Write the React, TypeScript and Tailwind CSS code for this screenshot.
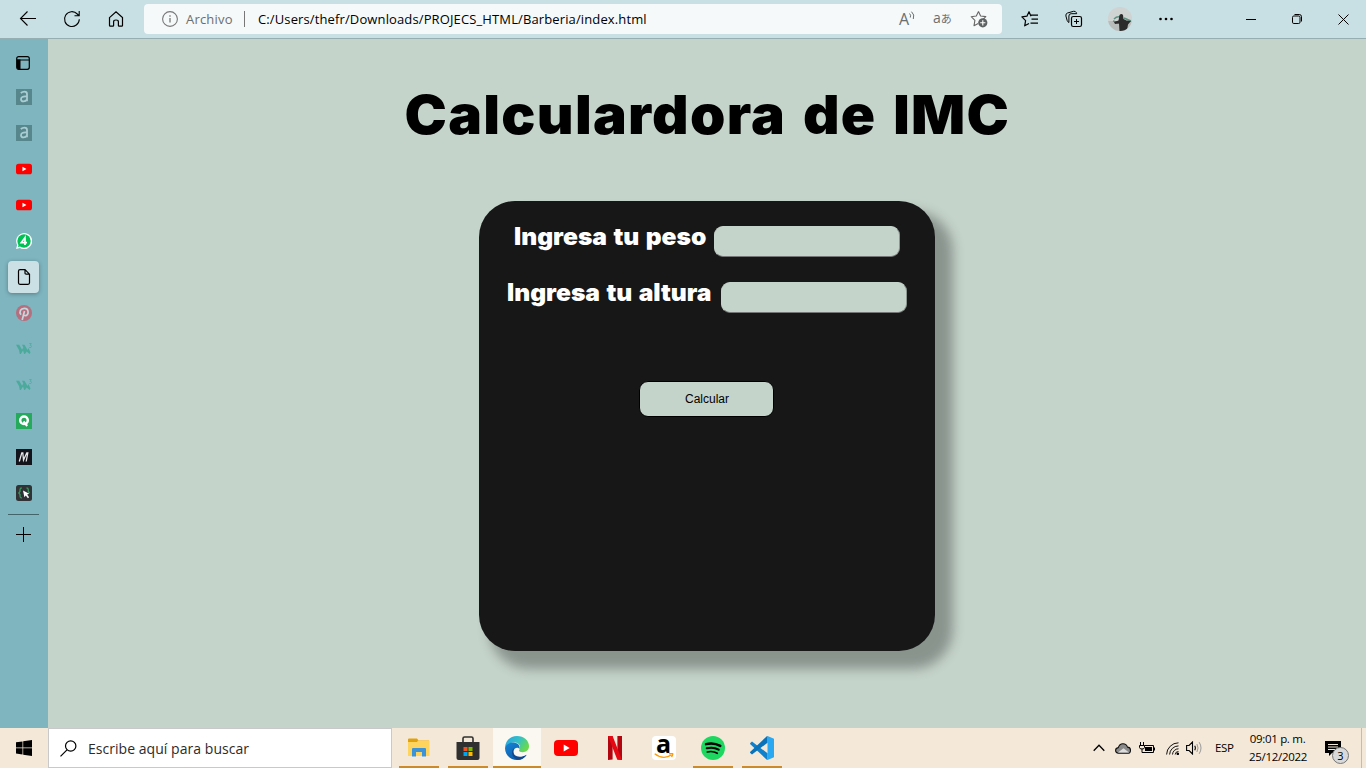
import React from "react";

type IconProps = { children: React.ReactNode; w?: number; h?: number; vb?: string; className?: string };

const Svg = ({ children, w = 16, h = 16, vb = "0 0 16 16", className = "" }: IconProps) => (
  <svg width={w} height={h} viewBox={vb} fill="none" className={`block shrink-0 ${className}`}>
    {children}
  </svg>
);

const BackIcon = () => (
  <Svg w={18} h={18} vb="0 0 18 18">
    <path d="M8.5 1.5 1.5 8.5l7 7M1.8 8.5H17" stroke="#000" strokeWidth="1.1" />
  </Svg>
);
const ReloadIcon = () => (
  <Svg w={18} h={18} vb="0 0 18 18">
    <path d="M16.3 9.2A7.4 7.4 0 1 1 14.3 4l1.5 1.5M16.2 1v4.7h-4.7" stroke="#000" strokeWidth="1.1" />
  </Svg>
);
const HomeIcon = () => (
  <Svg w={16} h={18} vb="0 0 16 18">
    <path d="M1.5 7.6 8 1.8l6.5 5.8v7.8q0 .8-.8.8h-2.6q-.7 0-.7-.7v-3.8Q10.400 10 8 10t-2.400 1.700v3.800q0 .7-.7.7H2.300q-.8 0-.8-.8z" stroke="#000" strokeWidth="1.2" />
  </Svg>
);
const InfoIcon = () => (
  <Svg>
    <circle cx="8" cy="8" r="7.4" stroke="#777" strokeWidth="1.1" />
    <path d="M8 7v4.500M8 4.300v1.400" stroke="#777" strokeWidth="1.300" />
  </Svg>
);
const StarAddIcon = () => (
  <Svg w={18} h={18} vb="0 0 18 18">
    <path d="M8.500 1.500 10.600 6l5.200.6-2.500 2.500M8.500 1.500 6.300 6l-5.100.7 3.700 3.700-.9 5.300 4.200-2.200" stroke="#666" strokeWidth="1.100" strokeLinejoin="round" />
    <circle cx="12.800" cy="12.800" r="4.600" fill="#5d6163" />
    <path d="M12.800 10.200v5.200M10.200 12.800h5.200" stroke="#fff" strokeWidth="1.100" />
  </Svg>
);
const FavoritesIcon = () => (
  <Svg w={18} h={18} vb="0 0 18 18">
    <path d="M10 6.200 8 1.700 5.900 6.200l-5 .7 3.700 3.700-.9 5.200 4.300-2.300M10 5.200h7M10.500 9.200H17M9.500 13.200H17" stroke="#000" strokeWidth="1.200" strokeLinejoin="round" />
  </Svg>
);
const CollectionsIcon = () => (
  <Svg w={18} h={18} vb="0 0 18 18">
    <rect x="6.500" y="6.500" width="10" height="10" rx="1.800" stroke="#000" strokeWidth="1.200" />
    <path d="M11.500 9v5M9 11.500h5M3.900 12.500Q2.600 11.800 2.200 10.600L.9 6Q.400 3.800 2.500 3l6-1.700q2-.4 2.800 1.300l.4 1.100M3.900 12.500V6q0-2.300 2.300-2.300h5.500" stroke="#000" strokeWidth="1" />
  </Svg>
);
const Avatar = () => (
  <Svg w={24} h={24} vb="0 0 24 24">
    <defs><clipPath id="av"><circle cx="12" cy="12" r="12" /></clipPath></defs>
    <g clipPath="url(#av)">
      <path fill="#cfd3d1" d="M0 0h24v24H0z" />
      <path fill="#b8bdbb" d="M0 14h24v10H0z" />
      <path d="M6 12Q9 9 12 10M16 11l7 3M5 14l6 2" stroke="#5f8f80" strokeWidth="1.500" />
      <path fill="#2c2a2b" d="M11.500 8q2-2 3.500 0l.5 4 3 1.500 4.500.500-3 3.500-1 6-7.500 1-.5-8-4 .500-1-2 4.500-1.500z" />
    </g>
  </Svg>
);

const TabsIcon = () => (
  <Svg w={14} h={14} vb="0 0 14 14">
    <rect x=".7" y=".7" width="12.600" height="12.600" rx="2" stroke="#000" strokeWidth="1.200" />
    <path d="M1 4h12" stroke="#000" />
    <path d="M1 3.500h3.500V13H2L1 12z" fill="#000" />
  </Svg>
);
const AlphaTab = () => (
  <Svg>
    <path fill="#58868d" d="M0 0h16v16H0z" />
    <path d="M4.800 4Q6.500 2.600 8.500 2.600 11 2.600 11 5v7.300M11 7.500C6.500 7 5 8.300 5 10.200c0 2.900 4.500 2.900 6 .3" stroke="#a9cdd3" strokeWidth="1.800" />
  </Svg>
);
const YoutubeIcon = ({ w, h }: { w: number; h: number }) => (
  <Svg w={w} h={h} vb="0 0 24 16">
    <rect width="24" height="16" rx="4" fill="#f00" />
    <path d="m9.700 4.600 6 3.400-6 3.400z" fill="#fff" />
  </Svg>
);
const WhatsappIcon = () => (
  <Svg>
    <path d="M0 16 1.200 12A8 8 0 1 1 4 14.900z" fill="#fff" />
    <circle cx="8" cy="8" r="6.700" fill="#00c254" />
    <path d="m2 14 .8-3L5 13.300z" fill="#00c254" />
    <path d="M9 12V4.500L5.300 9.600H11" stroke="#fff" strokeWidth="1.700" />
  </Svg>
);
const FileIcon = () => (
  <Svg w={14} h={16} vb="0 0 14 16">
    <path d="M8 .7H3Q1.500.7 1.500 2.200v11.600q0 1.500 1.500 1.500h8q1.500 0 1.500-1.500V5.200zV4q0 1.200 1.200 1.200h3.300" stroke="#000" strokeWidth="1.200" />
  </Svg>
);
const PinterestIcon = () => (
  <Svg>
    <circle cx="8" cy="8" r="8" fill="#b66f7e" />
    <path d="M5 9.800C2.800 6.800 4.500 3.300 8.300 3.300c5 0 4.800 7.300 1 7.300-1.200 0-1.900-.6-2-1.300M8.500 6 6.200 15" stroke="#c4d7dd" strokeWidth="1.700" />
  </Svg>
);
const W3Icon = () => (
  <Svg>
    <path d="M0 3.800h3.200L6 8.800 7.300 6.500 6 3.800h2.500l3 5.200 1-2 2 4.500-1 1.500-2.800-2.500-1.700 2.500H8.200L7 9.500 4.800 13h-1L3 9z" fill="#4baa9c" />
    <path d="M13.300 2.500h2L14.200 4.300q1.300 0 1.300 1.300t-2.300.9" stroke="#52ada2" strokeWidth=".9" />
  </Svg>
);
const QIcon = () => (
  <Svg>
    <path fill="#25a95a" d="M0 0h16v16H0z" />
    <circle cx="8" cy="7.200" r="3.800" stroke="#fff" strokeWidth="2.500" />
    <path d="m7.500 8.500 3.700 4.500" stroke="#fff" strokeWidth="2.200" />
  </Svg>
);
const MIcon = () => (
  <Svg>
    <path fill="#14141c" d="M0 0h16v16H0z" />
    <path d="M3.300 12.500 5.800 3.800h1l.7 7.200 3.300-7.200h1L10.200 12.500" stroke="#e8e8ea" strokeWidth="1.300" />
  </Svg>
);
const CursorIcon = () => (
  <Svg>
    <rect width="16" height="16" rx="2.500" fill="#303236" />
    <path d="M5.800 3Q4 3 4 4.800V6.500L2.800 8 4 9.500v1.700Q4 13 5.800 13M10.500 3q1.800 0 1.800 1.800v1.700L13.500 8" stroke="#35955b" strokeWidth="1.300" />
    <path d="m7 5.500 6.300 3.200-2.200.8 2 2.700-1.200 1-2.100-2.700-1.400 1.800z" fill="#fff" />
  </Svg>
);

const TabSlot = ({ children }: { children: React.ReactNode }) => (
  <div className="flex h-9 w-12 shrink-0 items-center justify-center">{children}</div>
);

const Sidebar = () => (
  <aside className="flex w-12 shrink-0 flex-col bg-[#7eb5bf] pt-[6px]">
    <div className="flex h-9 items-center pl-4"><TabsIcon /></div>
    <div className="-mt-[2px]" />
    <TabSlot><AlphaTab /></TabSlot>
    <TabSlot><AlphaTab /></TabSlot>
    <TabSlot><YoutubeIcon w={16} h={12} /></TabSlot>
    <TabSlot><YoutubeIcon w={16} h={12} /></TabSlot>
    <TabSlot><WhatsappIcon /></TabSlot>
    <div className="flex h-9 items-center pl-2">
      <div className="flex h-8 w-[31px] items-center justify-center rounded-[4px] bg-[#cae0e4] shadow-[0_1px_4px_rgba(0,0,0,0.3)]"><FileIcon /></div>
    </div>
    <TabSlot><PinterestIcon /></TabSlot>
    <TabSlot><W3Icon /></TabSlot>
    <TabSlot><W3Icon /></TabSlot>
    <TabSlot><QIcon /></TabSlot>
    <TabSlot><MIcon /></TabSlot>
    <TabSlot><CursorIcon /></TabSlot>
    <div className="mt-[3px] ml-2 h-px w-[31px] bg-[#43646a]" />
    <div className="mt-[12px] pl-4">
      <Svg w={15} h={15} vb="0 0 15 15"><path d="M7.500 0v15M0 7.500h15" stroke="#000" /></Svg>
    </div>
  </aside>
);

const BrowserBar = () => (
  <header className="flex h-[39px] shrink-0 items-center border-b border-[#96aeb1] bg-[#c8dfe3] font-['Open_Sans','Noto_Sans_CJK_JP',sans-serif]">
    <div className="ml-[19px]"><BackIcon /></div>
    <div className="ml-[26px]"><ReloadIcon /></div>
    <div className="ml-[27px]"><HomeIcon /></div>
    <div className="ml-[20px] flex h-[30px] w-[858px] items-center rounded-[4px] bg-[#f5f9fa] pl-[18px]">
      <InfoIcon />
      <span className="ml-2 w-[58px] pt-px text-[13px] tracking-[0.200px] whitespace-nowrap text-[#6b6e70]">Archivo</span>
      <div className="h-4 w-px bg-[#777]" />
      <span className="ml-[13px] w-[641px] pt-px text-[13px] tracking-[0.125px] whitespace-nowrap text-black">C:/Users/thefr/Downloads/PROJECS_HTML/Barberia/index.html</span>
      <div className="flex w-[17px] items-start text-[#6b6e70]">
        <span className="w-[10px] text-[16px] leading-[17px]">A</span>
        <Svg w={7} h={9} vb="0 0 7 9"><path d="M.5 2.500q1.800 1.500.8 4M2.500.7q3.500 3 1.800 7.300" stroke="#6b6e70" /></Svg>
      </div>
      <span className="ml-[17px] flex w-[18px] items-center pb-[2px] leading-4 whitespace-nowrap text-[#6b6e70]"><span className="text-[14px]">a</span><span className="pt-px text-[11px]">あ</span></span>
      <div className="ml-[19px]"><StarAddIcon /></div>
    </div>
    <div className="ml-[19px]"><FavoritesIcon /></div>
    <div className="ml-[26px]"><CollectionsIcon /></div>
    <div className="ml-[25px]"><Avatar /></div>
    <div className="ml-[27px]"><Svg w={14} h={4} vb="0 0 14 4"><g fill="#000"><circle cx="1.500" cy="2" r="1.300" /><circle cx="7" cy="2" r="1.300" /><circle cx="12.500" cy="2" r="1.300" /></g></Svg></div>
    <div className="ml-[73px] h-px w-[10px] bg-black" />
    <div className="ml-[36px]"><Svg w={10} h={10} vb="0 0 10 10"><rect x=".5" y="2" width="7.500" height="7.500" rx="1.300" stroke="#000" /><path d="M2.500.5h4.800Q9.500.5 9.500 2.700v4.800" stroke="#000" /></Svg></div>
    <div className="ml-[36px]"><Svg w={11} h={11} vb="0 0 11 11"><path d="m.5.5 10 10M10.500.5l-10 10" stroke="#000" /></Svg></div>
  </header>
);

const Field = ({ label, labelClass }: { label: string; labelClass: string }) => (
  <div className="flex h-[56px] items-start justify-center">
    <label className={`-mt-px mr-2 font-['Inter',sans-serif] text-[24px] leading-6 font-black whitespace-nowrap text-white ${labelClass}`}>
      <span className="inline-block origin-left scale-x-[1.025] [word-spacing:1.500px]">{label}</span>
    </label>
    <input className="h-[31px] w-[186px] rounded-[9px] border border-[#c5d4cb] border-r-[#8e9692] border-b-[#767676] bg-[#c5d4cb] outline-none" />
  </div>
);

const Page = () => (
  <main className="flex flex-1 flex-col items-center bg-[#c5d4cb] font-['Liberation_Sans',sans-serif]">
    <h1 className="mt-[44px] flex h-[64px] w-[602px] items-center justify-center font-['Inter',sans-serif] text-[54px] leading-none font-black whitespace-nowrap text-black">
      <span className="inline-block scale-x-[1.05] tracking-[1.200px] [word-spacing:4px]">Calculardora de IMC</span>
    </h1>
    <section className="mt-[54px] flex h-[450px] w-[456px] flex-col items-center rounded-[36px] bg-[#171717] pt-[25px] shadow-[14px_14px_12px_4px_rgba(0,0,0,0.3)]">
      <Field label="Ingresa tu peso" labelClass="w-[192px]" />
      <Field label="Ingresa tu altura" labelClass="w-[206px]" />
      <button className="mt-[43px] mr-px h-9 w-[135px] rounded-[9px] border border-black bg-[#c5d4cb] pl-px text-[12px] text-black">Calcular</button>
    </section>
  </main>
);

const WindowsIcon = () => (
  <Svg><path fill="#000" d="m0 2.300 6.500-.9v6.100H0zM7.200 1.300 16 0v7.500H7.200zM0 8.300h6.500v6.200L0 13.600zM7.200 8.300H16V16l-8.800-1.300z" /></Svg>
);
const ExplorerIcon = () => (
  <Svg w={22} h={20} vb="0 0 22 20">
    <path d="M0 1.500Q0 .5 1 .5h8l1.500 2H21v3H0z" fill="#dfa20c" />
    <path d="M10 2.500h11q.5 0 .5.500v15H0V4h9z" fill="#ffd45e" />
    <path d="M4 18.500V11q0-1 1-1h12q1 0 1 1v7.500h-4V14H8v4.500z" fill="#3d93d8" />
  </Svg>
);
const StoreIcon = () => (
  <Svg w={24} h={24} vb="0 0 24 24">
    <path d="M7 6V2.500Q7 1 8.500 1h7Q17 1 17 2.500V6" stroke="#303030" strokeWidth="1.600" />
    <path d="M.5 6h23v16q0 2-2 2h-19q-2 0-2-2z" fill="#303030" />
    <path fill="#f25022" d="M7.500 11h4v4h-4z" /><path fill="#7fba00" d="M12.500 11h4v4h-4z" />
    <path fill="#00a4ef" d="M7.500 16h4v4h-4z" /><path fill="#ffb900" d="M12.500 16h4v4h-4z" />
  </Svg>
);
const EdgeIcon = () => (
  <Svg w={24} h={24} vb="0 0 24 24">
    <defs>
      <linearGradient id="eg" x1="0" y1="0" x2="1" y2=".5"><stop offset=".1" stopColor="#2aa5dc" /><stop offset=".55" stopColor="#34c1c6" /><stop offset="1" stopColor="#68d94e" /></linearGradient>
      <linearGradient id="eb" x1="0" y1="0" x2=".7" y2="1"><stop offset="0" stopColor="#1685d6" /><stop offset="1" stopColor="#0b58a5" /></linearGradient>
    </defs>
    <path d="M0 12C.3 4.500 5.500 0 12 0c7 0 12 4.800 12 10 0 4-3 6.200-6.300 6.200-3 0-4.200-1.200-3.500-2.200 2.500-4-1-7.400-5-7.400C5 6.600 1 8.500 0 12z" fill="url(#eg)" />
    <path d="M0 12c.6-3.800 4.500-5.600 8.500-5.500 4.200.1 7 3.200 5.900 6.600-1-2.600-5.800-1.600-6 2.500-.2 4.800 4.800 8.500 13.200 3.400C19.500 22 16.200 24 12 24 5.300 24 0 18.800 0 12z" fill="url(#eb)" />
    <path d="M9.400 11.700C4.600 15 7.500 23.500 14 23.800c3.500-.6 6-2.600 7.700-5.100-7.500 4-13.400 1.500-13.400-3.200 0-1.600.5-2.900 1.100-3.800z" fill="#12488f" />
  </Svg>
);
const NetflixIcon = () => (
  <Svg w={14} h={24} vb="0 0 14 24">
    <path d="M0 0h4.600v23.500L0 24zM9.400 0H14v24l-4.600-.5z" fill="#b1060f" />
    <path d="M0 0h4.600L14 24q-2.500-.4-4.800-.5z" fill="#e50914" />
  </Svg>
);
const AmazonIcon = () => (
  <div className="flex h-6 w-6 flex-col items-center rounded-[4px] bg-white font-['Open_Sans',sans-serif] text-black">
    <span className="h-[17px] text-[25px] leading-[15px] font-bold">a</span>
    <Svg w={20} h={6} vb="0 0 20 6"><path d="M.7.7q8.500 6.600 17 1.100M15 .8q4-1 3.800.3t-1.300 3" stroke="#ff9900" strokeWidth="1.300" /></Svg>
  </div>
);
const SpotifyIcon = () => (
  <Svg w={24} h={24} vb="0 0 24 24">
    <circle cx="12" cy="12" r="12" fill="#1ed760" />
    <g stroke="#000" strokeLinecap="round"><path d="M5 8.200q7.500-2 14.300 1.700" strokeWidth="2.400" /><path d="M5.700 12.300q6.500-1.800 12 1.400" strokeWidth="2" /><path d="M6.300 16q5.500-1.300 10 1.300" strokeWidth="1.600" /></g>
  </Svg>
);
const VsCodeIcon = () => (
  <Svg w={24} h={24} vb="0 0 24 24">
    <path d="M17.500 0 24 2.800v18.400L17.500 24z" fill="#2aa9f2" />
    <path d="M17.500 17.300 2 5.500.300 7q-.5.600 0 1.200L16 23q.8 1 1.500 1z" fill="#1180cc" />
    <path d="M17.500 6.700 2 18.500.300 17q-.5-.6 0-1.200L16 1q.8-1 1.500-1z" fill="#0873ba" />
  </Svg>
);

const TaskApp = ({ children, line = "" }: { children: React.ReactNode; line?: string }) => (
  <div className="flex h-10 w-[49px] shrink-0 flex-col items-center">
    <div className="flex h-[38px] items-center pt-[2px]">{children}</div>
    <div className={`h-[2px] w-10 ${line}`} />
  </div>
);

const Taskbar = () => (
  <footer className="flex h-10 shrink-0 items-center bg-[#f4e8d9] font-['Open_Sans',sans-serif]">
    <div className="flex w-12 justify-center"><WindowsIcon /></div>
    <div className="flex h-10 w-[344px] items-center border border-[#c9c9c9] bg-white pl-[11px]">
      <Svg w={17} h={17} vb="0 0 17 17"><circle cx="10.700" cy="6" r="5.200" stroke="#000" strokeWidth="1.200" /><path d="m7 9.800-6.500 6.500" stroke="#000" strokeWidth="1.200" /></Svg>
      <span className="ml-[11px] text-[14px] tracking-[0.040px] whitespace-nowrap text-[#2b2b2b]">Escribe aquí para buscar</span>
    </div>
    <div className="ml-[2px] flex">
      <TaskApp line="bg-[#cd8a2b]"><ExplorerIcon /></TaskApp>
      <TaskApp line="bg-[#cd8a2b]"><StoreIcon /></TaskApp>
      <div className="mx-[0.5px] flex h-10 w-12 flex-col items-center border-b-2 border-[#cd8a2b] bg-[#fbf7f1] pt-2"><EdgeIcon /></div>
      <TaskApp><YoutubeIcon w={24} h={16} /></TaskApp>
      <TaskApp><NetflixIcon /></TaskApp>
      <TaskApp><AmazonIcon /></TaskApp>
      <TaskApp line="bg-[#cd8a2b]"><SpotifyIcon /></TaskApp>
      <TaskApp line="bg-[#cd8a2b]"><VsCodeIcon /></TaskApp>
    </div>
    <div className="ml-auto flex h-10 items-center">
      <Svg w={12} h={8} vb="0 0 12 8"><path d="M.7 6.800 6 1.300l5.300 5.500" stroke="#000" strokeWidth="1.300" /></Svg>
      <Svg w={16} h={11} vb="0 0 16 11" className="ml-[10px]"><path d="M3.500 10.300Q.6 10 .6 7.500T3.300 4.600Q4.500.600 8 .700t4.500 3.400q3 .2 3 3.200t-2.700 3z" fill="#8a8a8a" stroke="#111" strokeWidth="1.100" /><path d="m3 9.600 5.500-4.400 5.500 4.400z" fill="#ddd" /></Svg>
      <Svg w={17} h={12} vb="0 0 17 12" className="ml-[8px]"><path d="M5.500 3.500h9v7H4.500M15.500 5.500v3M1.500 0v3M4.500 0v3M.5 3.500h5v2Q5.500 7 3 7T.5 5.500zM3 7v3.500h2" stroke="#000" /><path d="M6 5h7v4H6z" fill="#000" /></Svg>
      <Svg w={13} h={13} vb="0 0 13 13" className="ml-[10px]"><g stroke="#111"><path d="M.6 12.500A12 12 0 0 1 12.500.8" /><path d="M3.600 12.500a9 9 0 0 1 8.900-8.600" /><path d="M6.500 12.500a6 6 0 0 1 6-5.700" /><path d="M9.200 12.500a3.300 3.300 0 0 1 3.300-3" /></g><circle cx="11.800" cy="11.800" r="1.300" fill="#000" /></Svg>
      <Svg w={17} h={14} vb="0 0 17 14" className="ml-[7px]"><path d="M.6 4.500h2.500L6.500 1v12L3.100 9.500H.6zM8.700 4.800q1.300 2.200 0 4.400" stroke="#000" strokeWidth="1.100" /><path d="M10.900 3q2.300 4 0 8M13.200 1.200q3.600 5.800 0 11.600" stroke="#999" /></Svg>
      <span className="ml-[12px] w-[20px] text-[11.500px] tracking-[-0.300px] text-black">ESP</span>
      <div className="ml-[12px] flex w-[62px] flex-col items-center text-[11.500px] leading-[18px] tracking-[-0.300px] whitespace-nowrap text-black"><span className="pr-px">09:01 p. m.</span><span>25/12/2022</span></div>
      <div className="relative ml-[16px] h-[15px] w-4">
        <Svg w={16} h={15} vb="0 0 16 15"><path d="M0 0h16v12H7l-3 3v-3H0z" fill="#000" /><path d="M3 3.500h10M3 6h10M3 8.500h7" stroke="#f4e8d9" /></Svg>
        <span className="absolute top-[6px] left-[7px] flex h-[17px] w-[17px] items-center justify-center rounded-full border border-[#777] bg-[#d9d9d9] text-[11px] leading-none text-black">3</span>
      </div>
      <div className="ml-[20px] h-10 w-px bg-[#c5bbae]" />
      <div className="w-[4px]" />
    </div>
  </footer>
);

export default function App() {
  return (
    <div className="flex h-[768px] w-[1366px] flex-col overflow-hidden">
      <BrowserBar />
      <div className="flex min-h-0 flex-1">
        <Sidebar />
        <Page />
      </div>
      <Taskbar />
    </div>
  );
}
